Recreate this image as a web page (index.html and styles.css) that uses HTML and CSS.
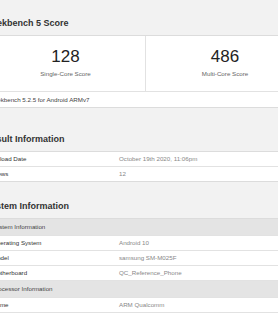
FILE: index.html
```html
<!DOCTYPE html>
<html>
<head>
<meta charset="utf-8">
<link rel="stylesheet" href="styles.css">
</head>
<body>
<div class="page">
  <section class="section score-section">
    <h2 class="heading">Geekbench 5 Score</h2>
    <div class="card">
      <div class="scores">
        <div class="score">
          <div class="score-value">128</div>
          <div class="score-label">Single-Core Score</div>
        </div>
        <div class="score score-right">
          <div class="score-value">486</div>
          <div class="score-label">Multi-Core Score</div>
        </div>
      </div>
      <div class="card-footer">Geekbench 5.2.5 for Android ARMv7</div>
    </div>
  </section>

  <section class="section">
    <h2 class="heading">Result Information</h2>
    <div class="table">
      <div class="row"><div class="name">Upload Date</div><div class="value">October 19th 2020, 11:06pm</div></div>
      <div class="row"><div class="name">Views</div><div class="value">12</div></div>
    </div>
  </section>

  <section class="section">
    <h2 class="heading">System Information</h2>
    <div class="table">
      <div class="row row-head"><div class="name">System Information</div></div>
      <div class="row"><div class="name">Operating System</div><div class="value">Android 10</div></div>
      <div class="row"><div class="name">Model</div><div class="value">samsung SM-M025F</div></div>
      <div class="row"><div class="name">Motherboard</div><div class="value">QC_Reference_Phone</div></div>
      <div class="row row-head"><div class="name">Processor Information</div></div>
      <div class="row"><div class="name">Name</div><div class="value">ARM Qualcomm</div></div>
      <div class="row"><div class="name">Topology</div><div class="value">1 Processor, 8 Cores</div></div>
    </div>
  </section>
</div>
</body>
</html>
```

FILE: styles.css
```css
html, body {
  margin: 0;
  padding: 0;
}
body {
  background: #f2f2f2;
  font-family: "Liberation Sans", Arial, sans-serif;
  color: #333;
  overflow: hidden;
}
.page {
  margin-left: -15px;
  width: 320px;
  padding-top: 17px;
}
.section + .section {
  margin-top: 18px;
}
.score-section {
  padding-bottom: 7px;
}
.heading {
  margin: 0 0 6px 0;
  font-size: 9px;
  line-height: 12px;
  font-weight: bold;
  color: #333;
}
.card {
  background: #fff;
  border: 1px solid #dcdcdc;
}
.scores {
  display: grid;
  grid-template-columns: 1fr 1fr;
}
.score {
  text-align: center;
  padding: 11px 0 13px;
}
.score-right {
  border-left: 1px solid #e2e2e2;
}
.score-value {
  font-size: 17px;
  line-height: 20px;
  color: #222;
}
.score-label {
  margin-top: 3px;
  font-size: 6.2px;
  line-height: 8px;
  color: #666;
}
.card-footer {
  border-top: 1px solid #e2e2e2;
  padding: 4px 3px 3px;
  font-size: 6.2px;
  line-height: 8px;
  color: #444;
}
.table {
  background: #fff;
  border: 1px solid #dcdcdc;
}
.row {
  display: grid;
  grid-template-columns: 127px 1fr;
  font-size: 6.2px;
  line-height: 8px;
}
.row + .row {
  border-top: 1px solid #e2e2e2;
}
.name {
  padding: 3px 6px;
  color: #333;
}
.value {
  padding: 3px 6px;
  color: #888;
}
.row-head {
  background: #e4e4e4;
}
.row-head .name {
  padding: 4px 6px 4px;
  color: #444;
}
```
